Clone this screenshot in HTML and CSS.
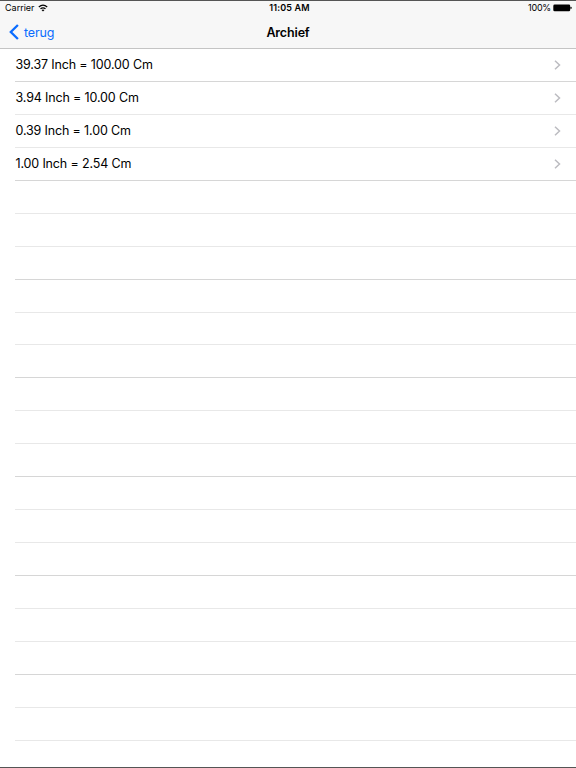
FILE: index.html
```
<!DOCTYPE html>
<html lang="nl">
<head>
<meta charset="UTF-8" />
<meta name="viewport" content="width=device-width, initial-scale=1.0"/>
<title>Archief</title>
<link rel="stylesheet" href="styles.css">
</head>
<body>

<div class="screen">
    <header class="top">
        <div class="status-bar">
            <div class="carrier">
                <span>Carrier</span>
                <svg class="wifi" viewBox="0 0 10 8">
                    <path d="M0.8 3 Q5 -0.6 9.2 3" />
                    <path d="M2.5 4.8 Q5 2.8 7.5 4.8" />
                    <path class="dot" d="M3.5 6.1 Q5 5 6.5 6.1 L5 7.6 Z" />
                </svg>
            </div>
            <span class="time">11:05 AM</span>
            <div class="power">
                <span>100%</span>
                <svg class="battery" viewBox="0 0 19 8">
                    <rect x="0.3" y="0.5" width="16.9" height="6.8" rx="1.4" />
                    <rect x="17.5" y="2.7" width="1" height="2.4" rx="0.5" />
                </svg>
            </div>
        </div>
        <nav class="nav-bar">
            <a class="back">
                <svg viewBox="0 0 10 16"><path d="M8.9 1 L1.8 8 L8.9 15" /></svg>
                <span>terug</span>
            </a>
            <h1 class="title">Archief</h1>
        </nav>
    </header>

    <ul class="list">
        <li class="row"><span>39.37 Inch = 100.00 Cm</span><svg class="arrow" viewBox="0 0 7 10"><path d="M1 0.8 L5.5 5 L1 9.2" /></svg></li>
        <li class="row"><span>3.94 Inch = 10.00 Cm</span><svg class="arrow" viewBox="0 0 7 10"><path d="M1 0.8 L5.5 5 L1 9.2" /></svg></li>
        <li class="row"><span>0.39 Inch = 1.00 Cm</span><svg class="arrow" viewBox="0 0 7 10"><path d="M1 0.8 L5.5 5 L1 9.2" /></svg></li>
        <li class="row"><span>1.00 Inch = 2.54 Cm</span><svg class="arrow" viewBox="0 0 7 10"><path d="M1 0.8 L5.5 5 L1 9.2" /></svg></li>
        <li class="row"></li>
        <li class="row"></li>
        <li class="row"></li>
        <li class="row"></li>
        <li class="row"></li>
        <li class="row"></li>
        <li class="row"></li>
        <li class="row"></li>
        <li class="row"></li>
        <li class="row"></li>
        <li class="row"></li>
        <li class="row"></li>
        <li class="row"></li>
        <li class="row"></li>
        <li class="row"></li>
        <li class="row"></li>
        <li class="row"></li>
    </ul>
</div>

</body>
</html>
```
FILE: styles.css
```
* {
    box-sizing: border-box;
}

body {
    margin: 0;
    background: #fff;
    color: #000;
    font-family: Inter, "Liberation Sans", sans-serif;
}

.screen {
    height: 768px;
    overflow: hidden;
    border-top: 1px solid #555;
    border-bottom: 1px solid #555;
}

.top {
    height: 48px;
    background: #f7f7f7;
    border-bottom: 1px solid #c4c4c4;
}

.status-bar {
    height: 15px;
    padding: 0 4px 1px 5px;
    display: grid;
    grid-template-columns: 1fr auto 1fr;
    align-items: center;
    font-size: 9px;
    line-height: 14px;
}

.carrier,
.power {
    display: flex;
    align-items: center;
}

.carrier {
    gap: 3px;
}

.power {
    justify-content: flex-end;
    gap: 2px;
    letter-spacing: -0.2px;
}

.wifi {
    width: 10px;
    height: 8px;
    fill: none;
    stroke: #000;
    stroke-width: 1.3;
}

.wifi .dot {
    fill: #000;
    stroke: none;
}

.battery {
    width: 19px;
    height: 8px;
}

.time {
    padding-left: 2px;
    font-weight: 600;
    letter-spacing: 0.15px;
}

.nav-bar {
    height: 32px;
    padding-left: 9px;
    display: grid;
    grid-template-columns: 1fr auto 1fr;
    align-items: center;
}

.back {
    display: flex;
    align-items: center;
    gap: 5px;
    color: #0a6cff;
    font-size: 12.5px;
    letter-spacing: -0.15px;
}

.back svg {
    width: 10px;
    height: 16px;
    fill: none;
    stroke: #0a6cff;
    stroke-width: 2.3;
}

.title {
    margin: 0 9px 0 0;
    font-size: 12.5px;
    font-weight: 600;
    letter-spacing: -0.15px;
}

.list {
    margin: 0;
    padding: 0 0 0 15px;
    list-style: none;
}

.row {
    height: 32.94px;
    padding-right: 15px;
    display: flex;
    align-items: center;
    justify-content: space-between;
    border-bottom: 1px solid #e8e8e8;
    font-size: 12.5px;
    letter-spacing: -0.15px;
}

.row span {
    padding-left: 0.5px;
}

.row:nth-child(1),
.row:nth-child(3n + 4) {
    border-bottom-color: #d6d6d6;
}

.arrow {
    width: 7px;
    height: 10px;
    fill: none;
    stroke: #bcbcc1;
    stroke-width: 1.5;
}
```
